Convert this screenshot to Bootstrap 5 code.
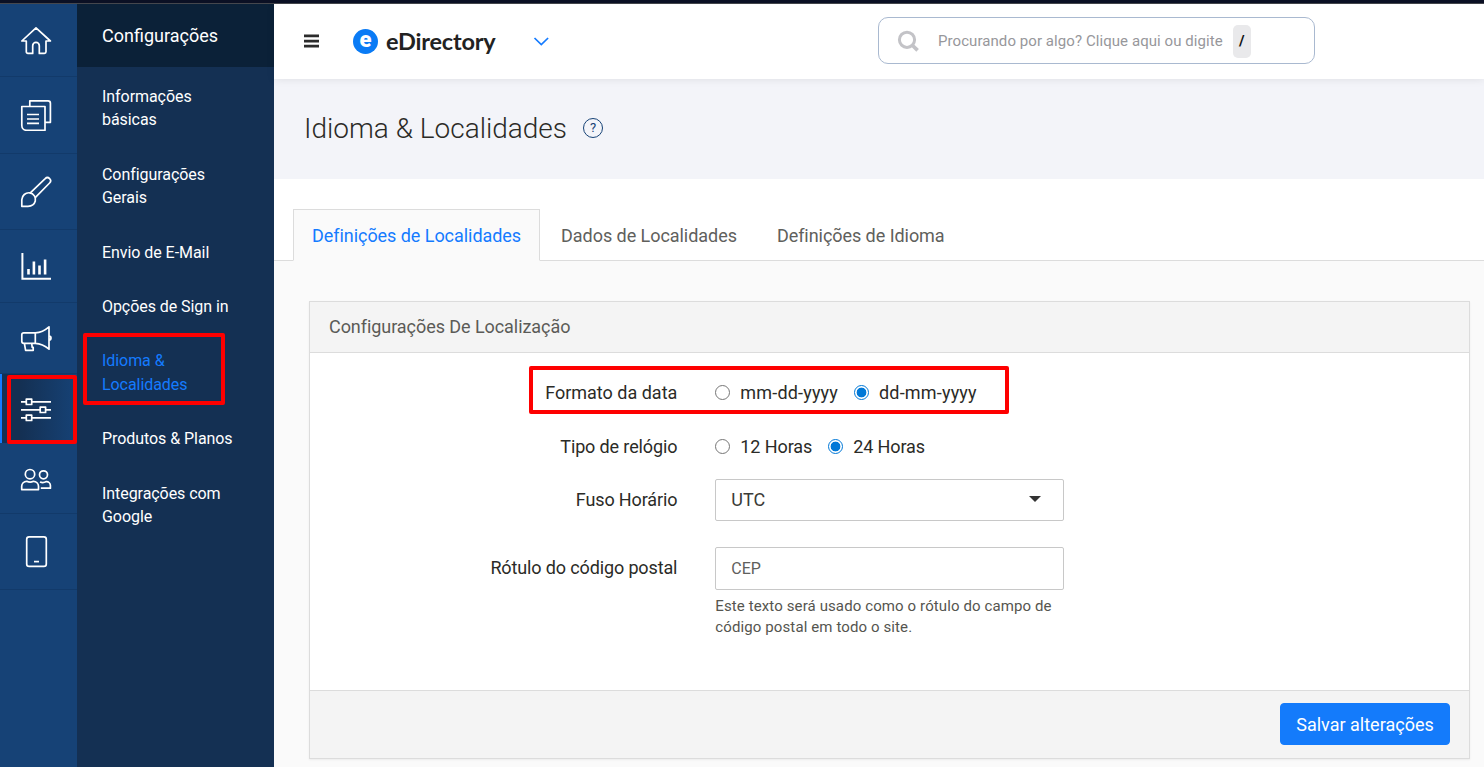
<!DOCTYPE html>
<html lang="pt-BR">
  <head>
    <meta charset="UTF-8" />
    <meta name="viewport" content="width=device-width, initial-scale=1" />
    <title>eDirectory - Idioma & Localidades</title>
    <link
      href="https://cdn.jsdelivr.net/npm/bootstrap@5.3.3/dist/css/bootstrap.min.css"
      rel="stylesheet"
    />
    <style>
      body {
        font-family: Roboto, "Liberation Sans", sans-serif;
        font-size: 18px;
        line-height: 26px;
        color: #2b2b27;
        background-color: #fafafa;
      }

      a {
        text-decoration: none;
      }

      .top-strip {
        height: 4px;
        background-color: #0b1024;
        border-bottom: 1px solid #45474d;
      }

      /* Icon rail */
      .rail {
        width: 77px;
        background-color: #164276;
      }
      .rail-item {
        height: 73px;
        padding-left: 20px;
        border-bottom: 1px solid #123a6a;
      }
      .rail-item svg {
        width: 32px;
        height: 32px;
        fill: none;
        stroke: #fff;
        stroke-width: 1.7;
        stroke-linejoin: round;
      }
      .rail-item.h-77 { height: 77px; }
      .rail-item.h-76 { height: 76px; }
      .rail-item.h-71 { height: 71px; }
      .rail-item.h-69 { height: 69px; }
      .rail-item.active {
        padding-left: 18px;
        border-left: 2px solid #147bff;
        border-bottom: 0;
        background: linear-gradient(to right, #143053 25%, #164276);
      }

      /* Submenu */
      .submenu {
        width: 197px;
        background-color: #143053;
      }
      .submenu-title {
        height: 63px;
        padding-left: 25px;
        background-color: #0b2138;
      }
      .submenu-list {
        padding-top: 2.4px;
      }
      .submenu-list a {
        padding: 15.5px 40px 15.5px 25px;
        font-size: 16px;
        line-height: 23.4px;
        letter-spacing: -0.06px;
        color: #fff;
      }
      .submenu-list a.active {
        color: #147bff;
      }

      /* Header */
      .app-header {
        height: 75px;
        padding: 0 0 2px 29px;
        box-shadow: 0 1px 8px rgba(0, 0, 0, 0.08);
        z-index: 1;
      }
      .menu-toggle {
        width: 16px;
        height: 14px;
        margin-right: 34px;
      }
      .brand-mark {
        width: 25px;
        height: 25px;
        margin: 1px 8px 0 0;
        background-color: #0a7bf5;
        font-size: 22px;
        font-weight: 900;
        line-height: 22px;
      }
      .brand-name {
        width: 109px;
        margin-right: 38px;
        font-family: Lato, sans-serif;
        font-size: 23.5px;
        font-weight: 700;
        letter-spacing: -0.2px;
        color: #222;
      }
      .brand-chevron {
        width: 16px;
        height: 9px;
        margin-top: 2px;
      }
      .search-box {
        width: 437px;
        height: 47px;
        margin-left: 329px;
        padding-left: 18px;
        border: 1px solid #a9b9d0;
        border-radius: 10px;
        font-size: 15px;
        letter-spacing: 0.07px;
        color: #97979b;
      }
      .search-box svg {
        width: 22px;
        height: 22px;
        margin-right: 19px;
      }
      .search-key {
        width: 18px;
        height: 33px;
        margin: 1px 0 0 10px;
        border-radius: 5px;
        background-color: #e9e9eb;
        font-weight: 700;
        color: #111;
      }

      .page-head {
        height: 100px;
        padding-left: 30px;
        background-color: #f3f4f9;
      }
      .page-head h1 {
        font-size: 28px;
        font-weight: 300;
      }
      .help-mark {
        width: 20px;
        height: 20px;
        margin: 0 0 2px 16px;
        border: 1px solid #164276;
        font-size: 13px;
        color: #164276;
      }

      /* Tabs */
      .nav-tabs {
        height: 82px;
        padding-left: 19px;
        --bs-nav-tabs-border-color: #dcdcdc;
        --bs-nav-tabs-border-radius: 0;
        --bs-nav-tabs-link-active-bg: #fafafa;
        --bs-nav-tabs-link-active-color: #147bff;
        --bs-nav-tabs-link-active-border-color: #dcdcdc #dcdcdc #fafafa;
        --bs-nav-link-color: #60605c;
      }
      .nav-tabs .nav-item {
        margin-right: 2px;
        letter-spacing: -0.05px;
      }
      .nav-tabs .nav-link {
        padding: 13px 18px 11px;
      }

      /* Settings panel */
      .settings {
        width: 1161px;
        height: 458px;
        margin: 40px 0 0 35px;
        border-radius: 0;
        border-color: #dcdcdc;
        box-shadow: 0 1px 2px rgba(0, 0, 0, 0.06);
        --bs-card-cap-bg: #f4f4f4;
        --bs-card-border-color: #dcdcdc;
      }
      .settings .card-header {
        height: 51px;
        padding: 12px 19px;
        border-radius: 0;
        letter-spacing: -0.06px;
        color: #5b5b57;
      }
      .settings .card-body {
        padding: 13px 0 0;
      }
      .settings .card-footer {
        height: 68px;
        padding: 0 19px 2px;
        border-radius: 0;
      }
      .settings .row {
        --bs-gutter-x: 38px;
        margin: 0;
      }
      .field-name {
        letter-spacing: -0.13px;
      }
      .radio-row {
        height: 54px;
        padding-bottom: 1px;
      }
      .radio-row .form-check-input {
        width: 15px;
        height: 15px;
        margin: 0 10px 0 0;
        border: 1px solid #767676;
      }
      .radio-row .form-check-input:checked {
        border-color: #0078d7;
        background: radial-gradient(#0078d7 4.6px, #fff 5.2px);
      }
      .radio-row label + .form-check-input {
        margin-left: 16px;
      }
      .date-options {
        letter-spacing: 0.18px;
      }
      .clock-options {
        letter-spacing: -0.1px;
      }
      .settings .form-select,
      .settings .form-control {
        height: 42px;
        padding: 0 15px 1px;
        border-color: #c8c8c8;
        border-radius: 2px;
        font-size: 18px;
        color: #3b3b37;
      }
      .settings .form-select {
        background-image: none;
      }
      .settings .form-control {
        height: 43px;
        font-size: 16px;
        color: #60605c;
      }
      .select-row {
        padding: 5px 0 26px;
      }
      .select-arrow {
        width: 12px;
        height: 6px;
        margin: 0 7px 2px 0;
      }
      .settings .form-text {
        margin-top: 6px;
        font-size: 15px;
        line-height: 21px;
        letter-spacing: 0.11px;
        color: #55554f;
      }
      .btn-save {
        width: 170px;
        height: 42px;
        padding: 1px 0 0;
        border-radius: 4px;
        font-size: 18px;
        --bs-btn-bg: #147bfb;
        --bs-btn-border-color: #147bfb;
      }

      /* Red callouts over the highlighted options */
      .callout {
        position: absolute;
        border: 4px solid #fe0000;
        border-radius: 2px;
        pointer-events: none;
        z-index: 2;
      }
      .callout-rail {
        top: 1px;
        left: 5px;
        width: 70px;
        height: 69px;
      }
      .callout-menu {
        top: -1px;
        left: 6px;
        width: 142px;
        height: 72px;
      }
      .callout-date {
        top: 0;
        left: 219px;
        width: 480px;
        height: 48px;
      }
    </style>
  </head>
  <body class="vh-100 d-flex flex-column overflow-hidden">
    <div class="top-strip flex-shrink-0"></div>

    <div class="d-flex flex-grow-1">
      <!-- Icon rail -->
      <nav class="rail flex-shrink-0">
        <a class="rail-item d-flex align-items-center" href="#" aria-label="Início">
          <svg viewBox="20 24 32 32">
            <path d="M36 27.8 21.8 41H26.3V51.8a1.6 1.6 0 0 0 1.6 1.6H32.7V45.7a3.3 3.3 0 0 1 6.6 0V53.4H44.4a1.6 1.6 0 0 0 1.6-1.6V41H50.4Z" />
          </svg>
        </a>
        <a class="rail-item h-77 d-flex align-items-center" href="#" aria-label="Conteúdo">
          <svg viewBox="20 99 32 32">
            <path d="M21.8 106.5H45V130.3H26.6a4.8 4.8 0 0 1-4.8-4.8ZM29.8 106.5V100.8H48a2.4 2.4 0 0 1 2.4 2.4V122.3H45" />
            <path d="M27 114.5H39M27 119H39M27 123.4H39" />
          </svg>
        </a>
        <a class="rail-item h-76 d-flex align-items-center" href="#" aria-label="Design">
          <svg viewBox="20 176 32 32">
            <path d="M30.3 192.8 45.2 178.6a3.1 3.1 0 0 1 4.4 4.4L35.2 197.6" />
            <path d="M21.8 206.3V199.8C22 195.4 25.6 192.4 29.6 192.8 33.8 193.4 36.3 197.6 35.3 201.1 34.4 204.5 31.4 206.3 28 206.3Z" />
          </svg>
        </a>
        <a class="rail-item d-flex align-items-center" href="#" aria-label="Relatórios">
          <svg viewBox="20 250 32 32">
            <path d="M21.4 253H23.4V277.8H51V279.8H21.4Z" fill="#fff" stroke="none" />
            <path d="M27.2 269H29.8V274.6H27.2ZM32.6 261.4H35.2V274.6H32.6ZM38.2 265.4H40.8V274.6H38.2ZM43.8 259.6H46.4V274.6H43.8Z" fill="#fff" stroke="none" />
          </svg>
        </a>
        <a class="rail-item h-71 d-flex align-items-center" href="#" aria-label="Promoção">
          <svg viewBox="20 322 32 32">
            <path d="M35.3 332.8H23.8a2 2 0 0 0-2 2V341.3a2 2 0 0 0 2 2H35.3ZM35.3 332.8C40.5 332.5 45 330.3 49 326.8V349.2C45 345.8 40.5 343.6 35.3 343.3M49 336a2 2 0 0 1 0 4M24.4 343.3 25.6 350.3H33.2V347.3H32.2L31.7 343.3" />
          </svg>
        </a>
        <a class="rail-item h-69 active position-relative d-flex align-items-center" href="#" aria-label="Configurações">
          <svg viewBox="20 392.5 32 32">
            <path d="M21 401.3H26.3M31.7 401.3H51M21 409.3H40.2M45.6 409.3H51M21 417.3H26.3M31.7 417.3H51" />
            <path d="M26.3 398.6h5.4v5.4h-5.4ZM40.2 406.6h5.4v5.4h-5.4ZM26.3 414.6h5.4v5.4h-5.4Z" />
          </svg>
          <span class="callout callout-rail"></span>
        </a>
        <a class="rail-item h-71 d-flex align-items-center" href="#" aria-label="Usuários">
          <svg viewBox="20 462 32 32">
            <circle cx="30" cy="474.2" r="4.7" />
            <circle cx="43.5" cy="474.8" r="4" />
            <path d="M21.7 489.6V486.3a5 5 0 0 1 5-5C28.8 482.3 31.4 482.3 33.5 481.3a5 5 0 0 1 5 5V489.6ZM40 482C41.5 482.6 44.4 482.6 46.4 481.6a4 4 0 0 1 4 4V488.2H40.8" />
          </svg>
        </a>
        <a class="rail-item h-76 d-flex align-items-center" href="#" aria-label="Aplicativo">
          <svg viewBox="20 536 32 32">
            <rect x="26.7" y="536.9" width="19.6" height="29.4" rx="2.4" />
            <path d="M34 561.6H39" />
          </svg>
        </a>
      </nav>

      <!-- Submenu -->
      <aside class="submenu flex-shrink-0">
        <div class="submenu-title d-flex align-items-center text-white">Configurações</div>
        <nav class="submenu-list d-flex flex-column">
          <a href="#">Informações básicas</a>
          <a href="#">Configurações Gerais</a>
          <a href="#">Envio de E-Mail</a>
          <a href="#" class="text-nowrap">Opções de Sign in</a>
          <a href="#" class="active position-relative">
            Idioma &amp;<br />Localidades
            <span class="callout callout-menu"></span>
          </a>
          <a href="#" class="text-nowrap">Produtos &amp; Planos</a>
          <a href="#">Integrações com Google</a>
        </nav>
      </aside>

      <main class="flex-grow-1">
        <!-- Header -->
        <header class="app-header position-relative bg-white d-flex align-items-center">
          <svg class="menu-toggle" viewBox="0 0 16 14" fill="#2b2b2b">
            <path d="M1 0.5h15v2.7H1zM1 5.7h15v2.7H1zM1 10.8h15v2.7H1z" />
          </svg>
          <span class="brand-mark rounded-circle text-white text-center">e</span>
          <span class="brand-name">eDirectory</span>
          <svg class="brand-chevron" viewBox="0 0 16 9" fill="none" stroke="#147bff" stroke-width="1.7">
            <path d="M1.5 1 8.3 7.6 15.1 1" />
          </svg>
          <div class="search-box d-flex align-items-center">
            <svg viewBox="0 0 22 22" fill="none" stroke="#c3c3c7">
              <circle cx="10" cy="9.8" r="7.6" stroke-width="3" />
              <path d="M15.3 15.2 20.6 20.4" stroke-width="3.6" />
            </svg>
            <span>Procurando por algo? Clique aqui ou digite</span>
            <span class="search-key d-flex align-items-center justify-content-center">/</span>
          </div>
        </header>

        <div class="page-head d-flex align-items-center">
          <h1 class="m-0">Idioma &amp; Localidades</h1>
          <span class="help-mark rounded-circle d-flex align-items-center justify-content-center">?</span>
        </div>

        <!-- Tabs -->
        <ul class="nav nav-tabs bg-white align-items-end">
          <li class="nav-item"><a class="nav-link active" href="#">Definições de Localidades</a></li>
          <li class="nav-item"><a class="nav-link" href="#">Dados de Localidades</a></li>
          <li class="nav-item"><a class="nav-link" href="#">Definições de Idioma</a></li>
        </ul>

        <!-- Settings form -->
        <form class="card settings">
          <div class="card-header">Configurações De Localização</div>
          <div class="card-body">
            <div class="row radio-row position-relative align-items-center">
              <div class="col-4 text-end">Formato da data</div>
              <div class="col-8 date-options d-flex align-items-center">
                <input class="form-check-input" type="radio" name="date" id="date-mdy" />
                <label for="date-mdy">mm-dd-yyyy</label>
                <input class="form-check-input" type="radio" name="date" id="date-dmy" checked />
                <label for="date-dmy">dd-mm-yyyy</label>
              </div>
              <span class="callout callout-date"></span>
            </div>
            <div class="row radio-row align-items-center">
              <div class="col-4 field-name text-end">Tipo de relógio</div>
              <div class="col-8 clock-options d-flex align-items-center">
                <input class="form-check-input" type="radio" name="clock" id="clock-12" />
                <label for="clock-12">12 Horas</label>
                <input class="form-check-input" type="radio" name="clock" id="clock-24" checked />
                <label for="clock-24">24 Horas</label>
              </div>
            </div>
            <div class="row select-row">
              <div class="col-4 field-name text-end pt-2">Fuso Horário</div>
              <div class="col-4">
                <div class="form-select d-flex align-items-center justify-content-between">
                  <span>UTC</span>
                  <svg class="select-arrow" viewBox="0 0 12 6" fill="#333"><path d="M0 0h12L6 6z" /></svg>
                </div>
              </div>
            </div>
            <div class="row">
              <label class="col-4 field-name text-end pt-2" for="zip-label">Rótulo do código postal</label>
              <div class="col-4">
                <input class="form-control" type="text" id="zip-label" value="CEP" />
                <div class="form-text">Este texto será usado como o rótulo do campo de código postal em todo o site.</div>
              </div>
            </div>
          </div>
          <div class="card-footer d-flex align-items-center justify-content-end">
            <button class="btn btn-primary btn-save" type="button">Salvar alterações</button>
          </div>
        </form>
      </main>
    </div>

    <script src="https://cdn.jsdelivr.net/npm/bootstrap@5.3.3/dist/js/bootstrap.bundle.min.js"></script>
  </body>
</html>
